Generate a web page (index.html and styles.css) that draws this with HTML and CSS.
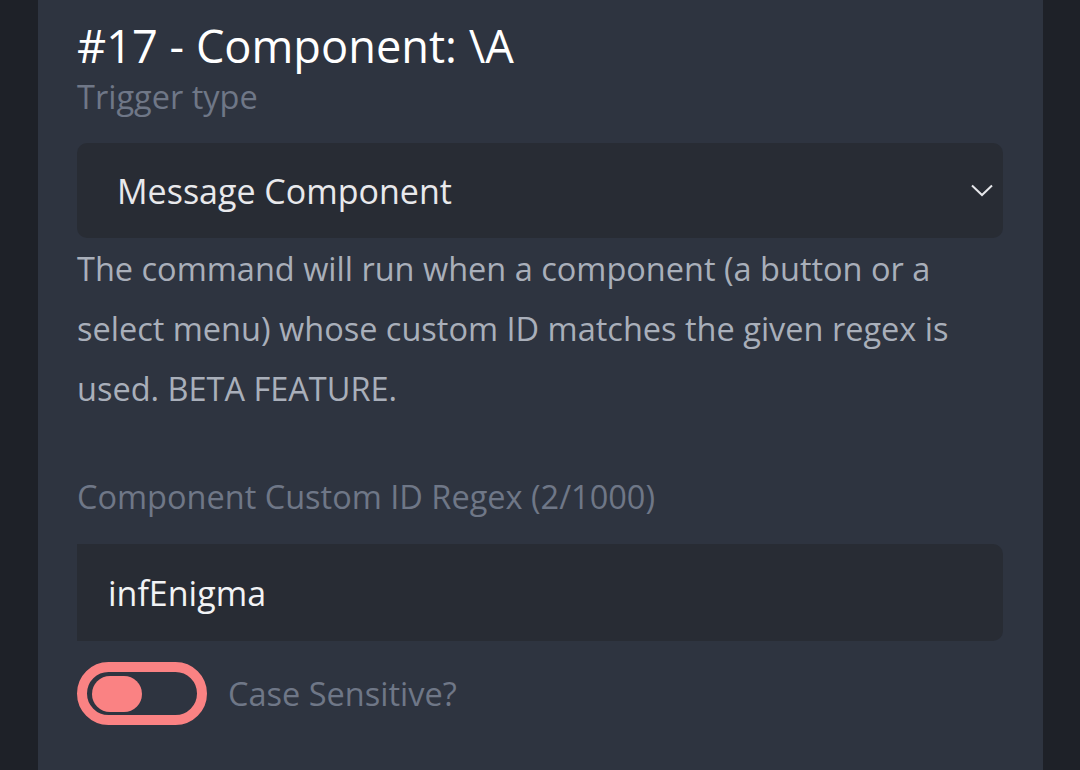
FILE: index.html
```html
<!DOCTYPE html>
<html lang="en">
<head>
<meta charset="utf-8">
<title>Trigger</title>
<link rel="stylesheet" href="styles.css">
</head>
<body>
<main class="panel">
  <h1 class="title">#17 - Component: \A</h1>
  <label class="label trigger-label">Trigger type</label>
  <div class="select">
    <span class="select-value">Message Component</span>
    <svg class="chevron" width="22" height="13" viewBox="0 0 22 13" aria-hidden="true">
      <path d="M1 1.5 L11 11 L21 1.5" fill="none" stroke="#e6e7ea" stroke-width="2"/>
    </svg>
  </div>
  <p class="desc">The command will run when a component (a button or a select menu) whose custom ID matches the given regex is used. BETA FEATURE.</p>
  <label class="label field-label">Component Custom ID Regex (2/1000)</label>
  <div class="input">infEnigma</div>
  <div class="toggle-row">
    <div class="toggle"><span class="knob"></span></div>
    <span class="toggle-label">Case Sensitive?</span>
  </div>
</main>
</body>
</html>
```
FILE: styles.css
```css
html, body {
  margin: 0;
  padding: 0;
  height: 100%;
}
body {
  background: #1e2128;
  font-family: "Open Sans", "Noto Sans", sans-serif;
  overflow: hidden;
}
.panel {
  box-sizing: border-box;
  margin-left: 38px;
  width: 1005px;
  height: 770px;
  background: #2e3440;
  padding: 19px 40px 0 39px;
  display: flex;
  flex-direction: column;
}
.title {
  margin: 0;
  font-size: 45.2px;
  font-weight: 400;
  line-height: 54px;
  color: #ffffff;
}
.label {
  display: block;
  font-size: 32.5px;
  line-height: 40px;
  color: #6f7787;
}
.trigger-label {
  margin-top: 4px;
}
.select {
  margin-top: 26px;
  height: 95px;
  background: #282c34;
  border-radius: 10px;
  display: flex;
  align-items: center;
  justify-content: space-between;
  padding: 0 10px 0 40px;
}
.select-value {
  font-size: 34px;
  color: #e8e9ec;
}
.desc {
  margin: 1px 0 0;
  font-size: 32.5px;
  line-height: 60px;
  color: #a9afba;
}
.field-label {
  margin-top: 58px;
}
.input {
  margin-top: 27px;
  height: 97px;
  background: #282c34;
  border-radius: 0 10px 10px 0;
  display: flex;
  align-items: center;
  padding-left: 31px;
  font-size: 34px;
  color: #f2f3f5;
}
.toggle-row {
  margin-top: 21px;
  display: flex;
  align-items: center;
  gap: 21px;
}
.toggle {
  box-sizing: border-box;
  width: 130px;
  height: 63px;
  border: 10px solid #fa8283;
  border-radius: 32px;
  background: #2e3440;
  display: flex;
  align-items: center;
  padding-left: 5px;
}
.knob {
  width: 50px;
  height: 36px;
  border-radius: 18px;
  background: #fa8283;
}
.toggle-label {
  font-size: 32.5px;
  color: #6f7787;
}
```
